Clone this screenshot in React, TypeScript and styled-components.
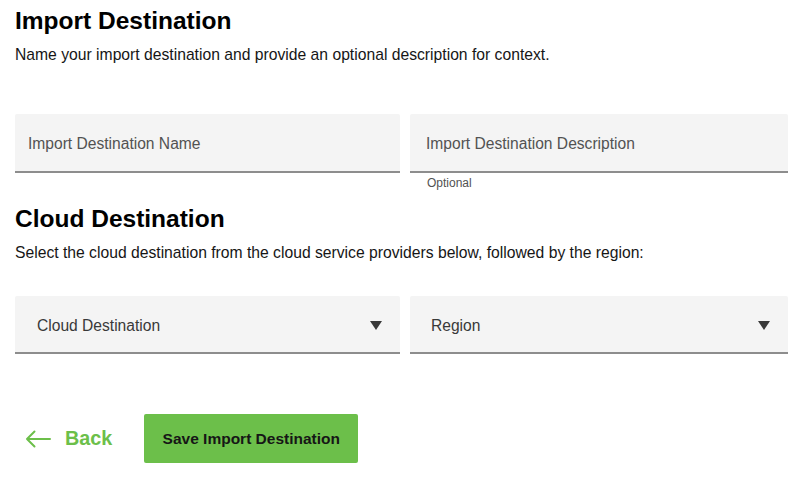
import React from "react";
import styled, { createGlobalStyle } from "styled-components";

const GlobalStyle = createGlobalStyle`
  body {
    margin: 0;
    background: #ffffff;
    font-family: "Liberation Sans", Arial, Helvetica, sans-serif;
    color: #161616;
  }
`;

export const Page = styled.div`
  padding: 7px 18px 0 15px;
`;

export const Heading = styled.h2<{ $top?: number }>`
  font-size: 24.5px;
  line-height: 28px;
  font-weight: 700;
  color: #000000;
  margin: ${(p) => p.$top ?? 0}px 0 0;
`;

export const Description = styled.p`
  font-size: 15.7px;
  line-height: 20px;
  color: #161616;
  margin: 10px 0 0;
`;

export const FieldRow = styled.div<{ $top: number }>`
  display: grid;
  grid-template-columns: 385px 1fr;
  column-gap: 10px;
  margin-top: ${(p) => p.$top}px;
`;

export const Field = styled.div`
  display: flex;
  flex-direction: column;
`;

export const TextBox = styled.div<{ $pad: number }>`
  height: 59px;
  box-sizing: border-box;
  display: flex;
  align-items: center;
  padding: 2px 0 0 ${(p) => p.$pad}px;
  background: #f4f4f4;
  border-bottom: 2px solid #8d8d8d;
  border-radius: 2px 2px 0 0;
  font-size: 15.6px;
  color: #525252;
`;

export const Helper = styled.span`
  font-size: 12px;
  line-height: 14px;
  color: #525252;
  margin-top: 3px;
  padding-left: 17px;
`;

export const Select = styled.div<{ $pad: number }>`
  height: 58px;
  box-sizing: border-box;
  display: flex;
  align-items: center;
  justify-content: space-between;
  padding: 3px 18px 0 ${(p) => p.$pad}px;
  background: #f4f4f4;
  border-bottom: 2px solid #8d8d8d;
  border-radius: 2px 2px 0 0;
  font-size: 15.6px;
  color: #393939;
`;

export const Caret = styled.span`
  width: 0;
  height: 0;
  border-left: 6px solid transparent;
  border-right: 6px solid transparent;
  border-top: 9px solid #393939;
`;

export const Actions = styled.div`
  display: flex;
  align-items: center;
  gap: 32px;
  margin-top: 60px;
  padding-left: 10px;
`;

export const BackLink = styled.a`
  display: flex;
  align-items: center;
  gap: 14px;
  font-size: 19.8px;
  font-weight: 700;
  color: #6cbf4a;
  text-decoration: none;
  cursor: pointer;
`;

export const SaveButton = styled.button`
  width: 214px;
  height: 49px;
  border: none;
  border-radius: 2px;
  background: #6cbf4a;
  color: #161616;
  font-family: "Liberation Sans", Arial, Helvetica, sans-serif;
  font-size: 15.5px;
  font-weight: 700;
  cursor: pointer;
`;

const ArrowLeft = () => (
  <svg width="26" height="18" viewBox="0 0 26 18" fill="none">
    <path d="M25 9H2M9.5 1.5L2 9l7.5 7.5" stroke="#6cbf4a" strokeWidth="2" strokeLinecap="round" strokeLinejoin="round" />
  </svg>
);

const App = () => {
  return (
    <Page>
      <GlobalStyle />
      <Heading>Import Destination</Heading>
      <Description>Name your import destination and provide an optional description for context.</Description>

      <FieldRow $top={49}>
        <Field>
          <TextBox $pad={13}>Import Destination Name</TextBox>
        </Field>
        <Field>
          <TextBox $pad={16}>Import Destination Description</TextBox>
          <Helper>Optional</Helper>
        </Field>
      </FieldRow>

      <Heading $top={15}>Cloud Destination</Heading>
      <Description>Select the cloud destination from the cloud service providers below, followed by the region:</Description>

      <FieldRow $top={33}>
        <Select $pad={22}>
          Cloud Destination
          <Caret />
        </Select>
        <Select $pad={21}>
          Region
          <Caret />
        </Select>
      </FieldRow>

      <Actions>
        <BackLink>
          <ArrowLeft />
          Back
        </BackLink>
        <SaveButton>Save Import Destination</SaveButton>
      </Actions>
    </Page>
  );
};

export default App;
